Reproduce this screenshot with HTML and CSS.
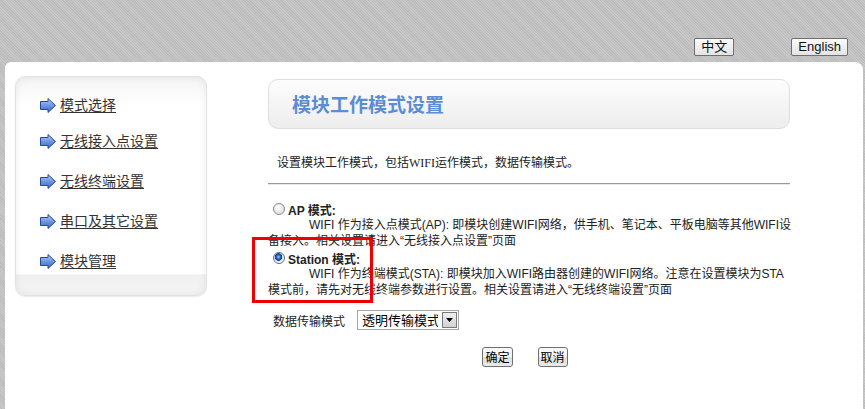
FILE: index.html
```html
<!DOCTYPE html>
<html lang="zh-CN">
<head>
  <meta charset="UTF-8" />
  <title>模块工作模式设置</title>
  <link rel="stylesheet" href="styles.css">
</head>
<body>
  <svg class="sprite" width="0" height="0">
    <defs>
      <linearGradient id="arrowFill" x1="0" y1="0" x2="0" y2="1">
        <stop offset="0" stop-color="#b4ccf6"/>
        <stop offset="0.5" stop-color="#6f96e0"/>
        <stop offset="1" stop-color="#3b62c4"/>
      </linearGradient>
      <symbol id="arrow" viewBox="0 0 16 15">
        <path d="M0.5 3.5H8V0.5L15.5 7.5L8 14.5V11.5H0.5Z" fill="url(#arrowFill)" stroke="#29479c"/>
      </symbol>
    </defs>
  </svg>

  <div class="top">
    <button class="lang">中文</button>
    <button class="lang">English</button>
  </div>

  <div class="panel">
    <!-- left menu -->
    <div class="side">
      <ul class="menu">
        <li><svg class="ico"><use href="#arrow"/></svg><a href="#">模式选择</a></li>
        <li><svg class="ico"><use href="#arrow"/></svg><a href="#">无线接入点设置</a></li>
        <li><svg class="ico"><use href="#arrow"/></svg><a href="#">无线终端设置</a></li>
        <li><svg class="ico"><use href="#arrow"/></svg><a href="#">串口及其它设置</a></li>
        <li><svg class="ico"><use href="#arrow"/></svg><a href="#">模块管理</a></li>
      </ul>
    </div>

    <!-- mode settings -->
    <div class="main">
      <div class="title-box"><h1>模块工作模式设置</h1></div>
      <p class="intro">设置模块工作模式，包括<span class="serif">WIFI</span>运作模式，数据传输模式。</p>
      <hr class="rule">

      <div class="mode">
        <label class="mode-name"><input type="radio" name="mode" class="radio"> <b>AP 模式:</b></label>
        <p class="mode-desc">WIFI 作为接入点模式(AP): 即模块创建WIFI网络，供手机、笔记本、平板电脑等其他WIFI设<br>备接入。相关设置请进入“无线接入点设置”页面</p>
      </div>
      <div class="mode">
        <label class="mode-name"><input type="radio" name="mode" class="radio" checked> <b>Station 模式:</b></label>
        <p class="mode-desc">WIFI 作为终端模式(STA): 即模块加入WIFI路由器创建的WIFI网络。注意在设置模块为STA<br>模式前，请先对无线终端参数进行设置。相关设置请进入“无线终端设置”页面</p>
      </div>

      <div class="row">
        <span class="row-label">数据传输模式</span>
        <div class="select">
          <select class="select-box">
            <option>透明传输模式</option>
            <option>命令模式</option>
          </select>
          <span class="select-btn"><svg width="7" height="4" viewBox="0 0 7 4"><path d="M0 0H7L3.5 4Z" fill="#000"/></svg></span>
        </div>
      </div>

      <div class="actions">
        <button class="btn">确定</button>
        <button class="btn">取消</button>
      </div>

      <div class="mark"></div>
    </div>
  </div>
</body>
</html>
```

FILE: styles.css
```css
body {
  margin: 0;
  height: 409px;
  overflow: hidden;
  font-family: "Liberation Sans", "Noto Sans CJK SC", sans-serif;
  font-size: 12px;
  color: #222;
  background: repeating-linear-gradient(45deg, #c8c8c8 0 1px, #bcbcbc 1px 2px);
}
.sprite {
  position: absolute;
}
.top {
  height: 62px;
  display: flex;
  justify-content: flex-end;
  align-items: flex-start;
  gap: 57px;
  padding-right: 17px;
  box-sizing: border-box;
  padding-top: 38px;
}
.lang {
  height: 18px;
  padding: 0 6px;
  font-family: "Liberation Sans", "Noto Sans CJK SC", sans-serif;
  font-size: 13px;
  line-height: 16px;
  color: #111;
  border: 1px solid #6f6f6f;
  border-radius: 2px;
  background: linear-gradient(#fafafa, #e4e4e4);
}
.panel {
  margin: 0 2px 0 5px;
  height: 347px;
  background: #fff;
  border-radius: 6px 8px 0 0;
  display: flex;
  align-items: flex-start;
  padding: 14px 0 0 10px;
  box-sizing: border-box;
}
.side {
  width: 192px;
  height: 220px;
  box-sizing: border-box;
  border: 1px solid #e2e2e2;
  border-radius: 10px;
  background: linear-gradient(#f4f4f4, #fff 12%, #fff 90%, #f0f0f0 91%, #f4f4f4);
  box-shadow: inset 0 0 8px rgba(0,0,0,0.07), 0 1px 1px rgba(0,0,0,0.08);
  margin-right: 61px;
  padding: 20px 0 0 24px;
}
.menu {
  list-style: none;
  margin: 0;
  padding: 0;
}
.menu li {
  display: flex;
  align-items: center;
  height: 16px;
  margin-bottom: 24px;
}
.menu li:first-child {
  margin-bottom: 20px;
}
.ico {
  width: 16px;
  height: 15px;
  margin-right: 4px;
}
.menu a {
  font-size: 14px;
  line-height: 16px;
  color: #333;
  text-decoration: underline;
  text-underline-offset: 2px;
}
.main {
  position: relative;
  width: 522px;
  padding-top: 3px;
}
.title-box {
  height: 50px;
  box-sizing: border-box;
  border: 1px solid #dedede;
  border-radius: 10px;
  background: linear-gradient(#fdfdfd, #ededed);
}
.title-box h1 {
  margin: 0;
  padding-left: 23px;
  font-family: "Noto Sans CJK SC", sans-serif;
  font-size: 19px;
  line-height: 48px;
  color: #5a8dd3;
}
.intro {
  margin: 26px 0 0 9px;
  line-height: 16px;
}
.serif {
  font-family: "Liberation Serif", serif;
}
.rule {
  margin: 12px 0 0;
  border: 0;
  border-top: 1px solid #9a9a9a;
  border-bottom: 1px solid #e8e8e8;
}
.mode {
  margin-top: 16px;
}
.mode + .mode {
  margin-top: 1px;
}
.mode-name {
  display: flex;
  align-items: center;
  height: 16px;
  padding-left: 5px;
}
.mode-name b {
  margin-left: 3px;
  font-size: 12px;
}
.radio {
  appearance: none;
  margin: 0;
  width: 12px;
  height: 12px;
  border-radius: 50%;
  border: 1px solid #8b8b8b;
  background: radial-gradient(circle at 40% 35%, #fff, #d4d4d4);
}
.radio:checked {
  border-color: #5d6d86;
  background: radial-gradient(circle at 45% 40%, #9ed0ff 0, #1d68c8 2px, #0c3d8a 3.5px, #dcdcdc 4px, #fff 6px);
}
.mode-desc {
  margin: 0 -20px 0 0;
  line-height: 16px;
  text-indent: 41px;
}
.row {
  display: flex;
  align-items: center;
  margin-top: 12px;
  padding-left: 5px;
}
.row-label {
  width: 84px;
}
.select {
  display: flex;
  align-items: center;
  height: 20px;
  box-sizing: border-box;
  border: 1px solid #a5a5a5;
  background: #fff;
}
.select-box {
  appearance: none;
  border: 0;
  outline: 0;
  padding: 0 4px;
  width: 84px;
  font-family: "Liberation Sans", "Noto Sans CJK SC", sans-serif;
  font-size: 13px;
  color: #000;
  background: transparent;
}
.select-btn {
  width: 15px;
  height: 16px;
  margin-right: 1px;
  display: flex;
  align-items: center;
  justify-content: center;
  box-sizing: border-box;
  border: 1px solid #7a7a7a;
  background: linear-gradient(#f0f0f0, #d2d2d2);
}
.actions {
  display: flex;
  justify-content: center;
  gap: 25px;
  margin-top: 17px;
  padding-right: 8px;
}
.btn {
  height: 20px;
  padding: 0 2px;
  font-family: "Noto Sans CJK SC", sans-serif;
  font-size: 12px;
  line-height: 16px;
  color: #000;
  border: 1px solid #707070;
  border-radius: 3px;
  background: linear-gradient(#f7f7f7 50%, #dedede 50%, #e9e9e9);
}
.mark {
  position: absolute;
  left: -16px;
  top: 161px;
  width: 121px;
  height: 66px;
  box-sizing: border-box;
  border: 3px solid #ee0000;
}
```
